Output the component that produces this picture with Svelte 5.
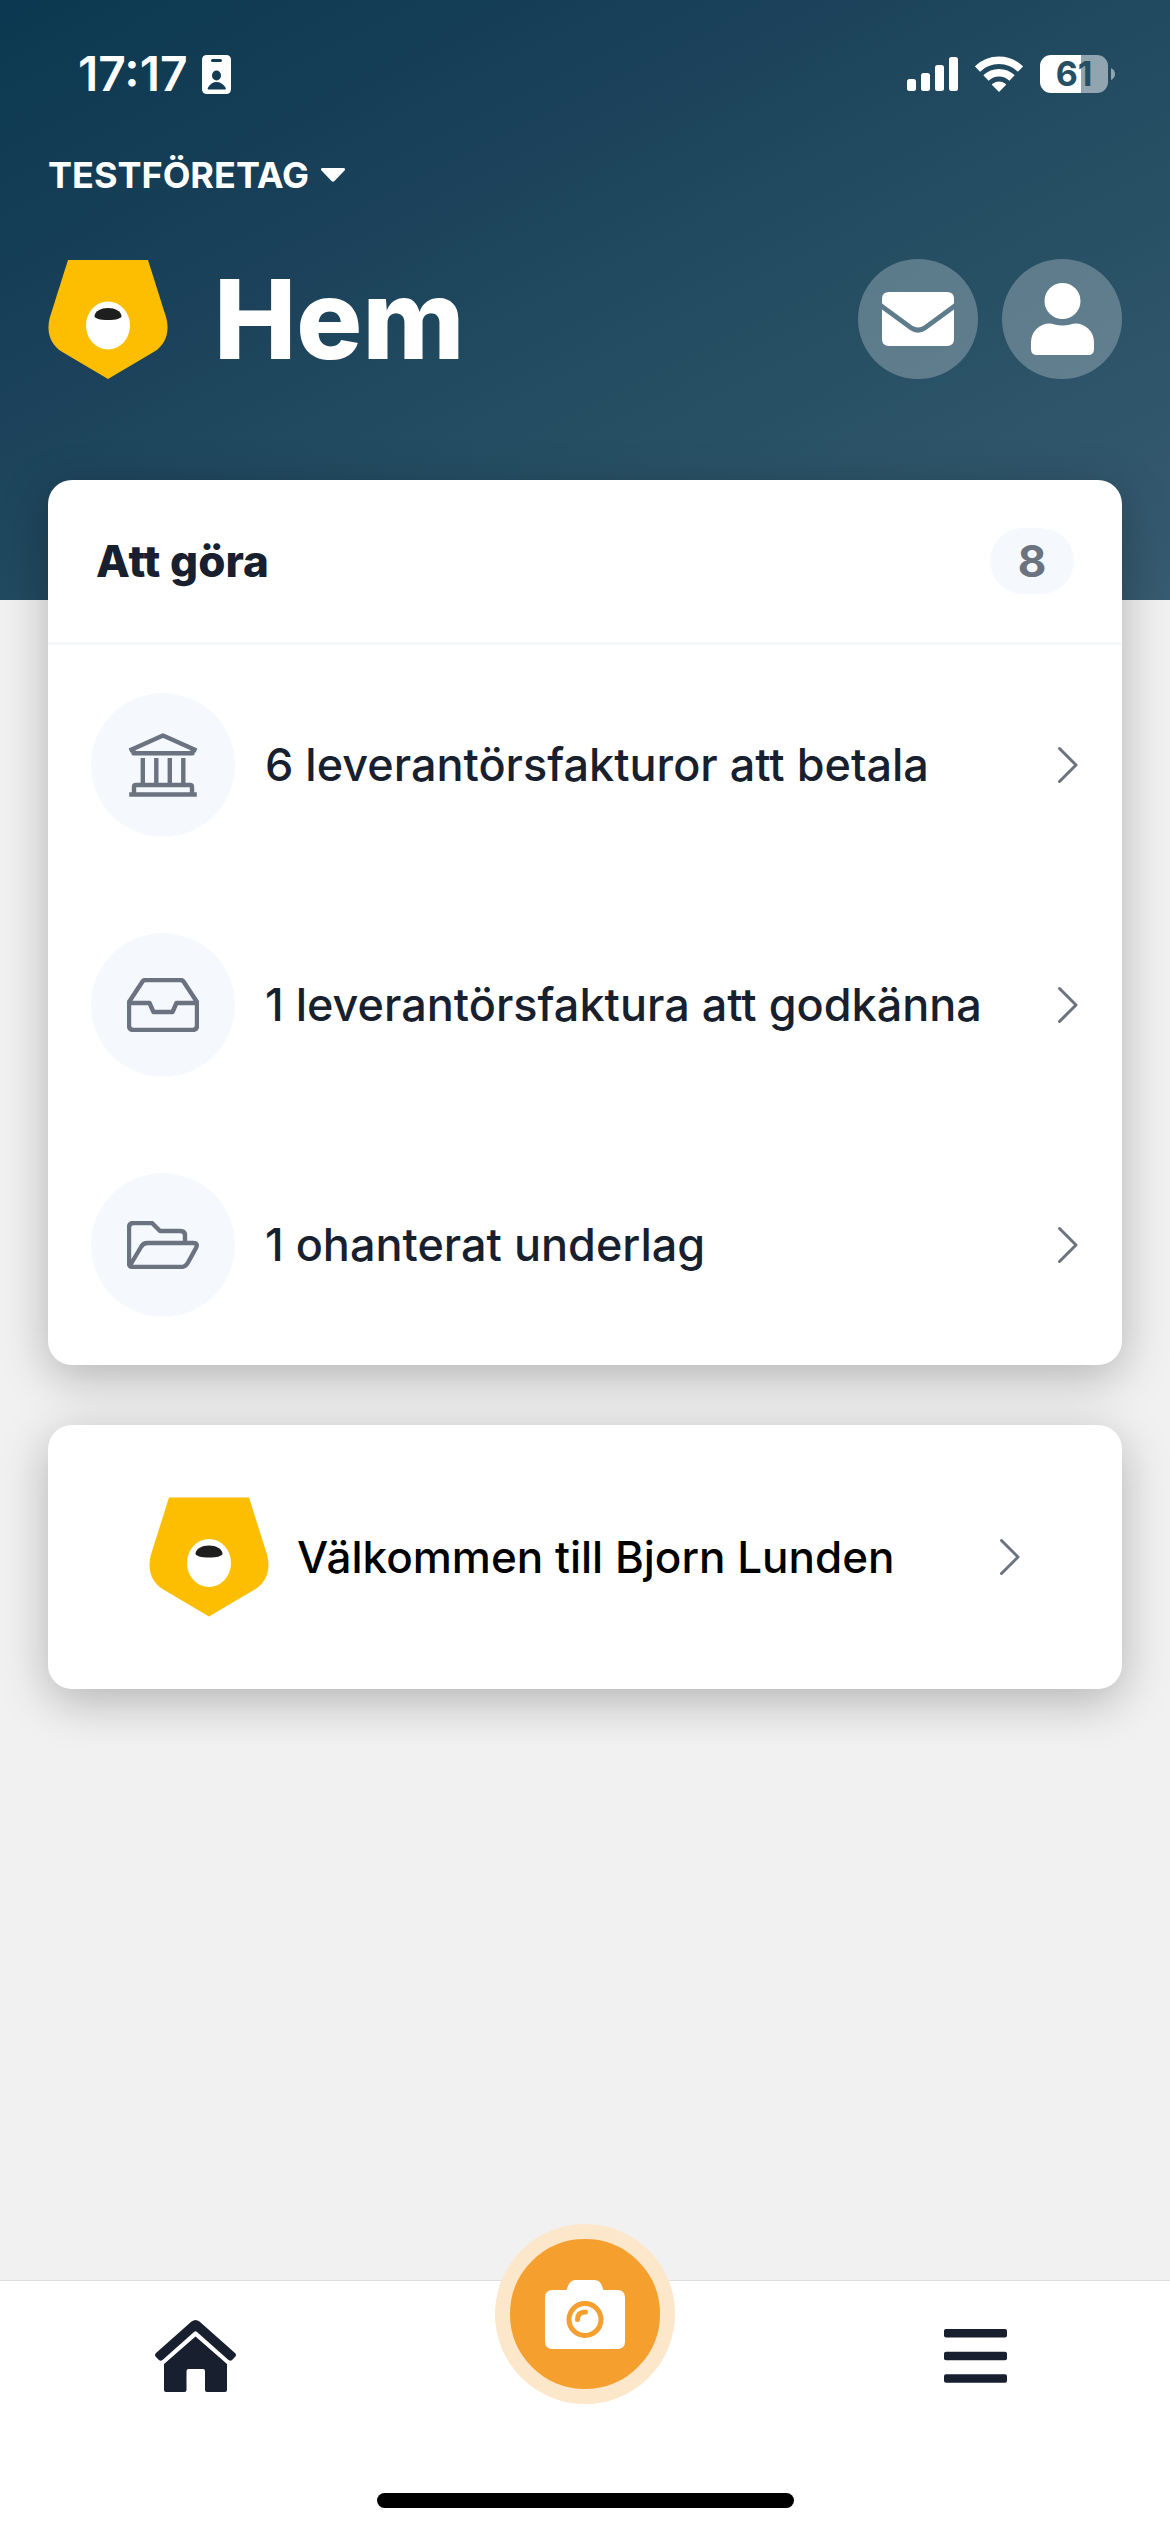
<script>
  const company = 'TESTFÖRETAG';
  const tasks = [
    { icon: 'bank', label: '6 leverantörsfakturor att betala' },
    { icon: 'inbox', label: '1 leverantörsfaktura att godkänna' },
    { icon: 'folder', label: '1 ohanterat underlag' }
  ];
  const total = 8;
</script>

{#snippet logo()}
  <svg class="logo" width="120" height="119" viewBox="0 0 120 119" aria-hidden="true">
    <path fill="#fdbe02" d="M20 0H100L118.300 58C122 73 117 84.500 106.500 91.500L60 119L13.500 91.500C3 84.500-2 73 1.700 58Z" />
    <ellipse cx="60" cy="65.500" rx="22" ry="24" fill="#fff" />
    <path fill="#1e1e1e" d="M46.500 56C47 51 53 48 60 48S73 51 73.500 56C73.500 58.500 68 60 60 60S46.500 58.500 46.500 56Z" />
  </svg>
{/snippet}

{#snippet chevron()}
  <svg class="chevron" width="22" height="38" viewBox="0 0 22 38" aria-hidden="true">
    <path d="M2.500 2.500L19 19L2.500 35.500" />
  </svg>
{/snippet}

<div class="app">
  <header class="top">
    <div class="status">
      <div class="clock">
        <span class="time">17:17</span>
        <svg width="29" height="39" viewBox="0 0 29 39" aria-hidden="true">
          <path fill="#fff" fill-rule="evenodd" d="M5 0H24Q29 0 29 5V34Q29 39 24 39H5Q0 39 0 34V5Q0 0 5 0ZM10.500 4Q9 4 9 5.500T10.500 7H18.500Q20 7 20 5.500T18.500 4ZM14.500 15.500A4.500 5 0 1 0 14.500 25.500A4.500 5 0 1 0 14.500 15.500ZM7 34.500Q5 34.500 6 32.500C8 29 11 27 14.500 27S21.500 29 23.500 32.500Q24.500 34.500 22.500 34.500Z" />
        </svg>
      </div>
      <div class="signals">
        <svg width="51" height="34" viewBox="0 0 51 34" fill="#fff" aria-hidden="true">
          <rect x="0" y="22" width="9" height="12" rx="2.500" />
          <rect x="14" y="16" width="9" height="18" rx="2.500" />
          <rect x="28" y="8" width="9" height="26" rx="2.500" />
          <rect x="42" y="0" width="9" height="34" rx="2.500" />
        </svg>
        <svg width="48" height="36" viewBox="0 0 48 36" fill="none" stroke="#fff" aria-hidden="true">
          <path stroke-width="7.500" d="M2.500 13A31 31 0 0 1 45.500 13" />
          <path stroke-width="7.500" d="M11 22A18.500 18.500 0 0 1 37 22" />
          <path fill="#fff" stroke="none" d="M17.300 29.300Q16.500 28.500 17.500 27.800Q24 23 30.500 27.800Q31.500 28.500 30.700 29.300L24 36Z" />
        </svg>
        <div class="battery">
          <span class="level">61</span>
          <svg width="4" height="12" viewBox="0 0 4 12" aria-hidden="true"><path fill="#fff" fill-opacity=".5" d="M0 0Q4 2 4 6T0 12Z" /></svg>
        </div>
      </div>
    </div>

    <button class="company" type="button">
      <span>{company}</span>
      <svg width="24" height="14" viewBox="0 0 24 14" aria-hidden="true">
        <path fill="#fff" d="M1.500 0H22.500Q25 .5 23.500 2.500L13.500 13Q12 14.500 10.500 13L.5 2.500Q-1 .5 1.500 0Z" />
      </svg>
    </button>

    <div class="hero">
      {@render logo()}
      <h1>Hem</h1>
      <button class="round" type="button" aria-label="Meddelanden">
        <svg width="72" height="54" viewBox="0 0 72 54" fill="#fff" aria-hidden="true">
          <path d="M0 7Q0 0 7 0H65Q72 0 72 7V11.500L42 33.500Q36 37.500 30 33.500L0 11.500Z" />
          <path d="M0 17.500L28 38Q36 43.500 44 38L72 17.500V47Q72 54 65 54H7Q0 54 0 47Z" />
        </svg>
      </button>
      <button class="round" type="button" aria-label="Profil">
        <svg width="63" height="72" viewBox="0 0 63 72" fill="#fff" aria-hidden="true">
          <circle cx="31.500" cy="18" r="18" />
          <path d="M0 59A18.500 18.500 0 0 1 18.500 40.500Q21 40.500 23.500 41.500Q31.500 43.500 39.500 41.500Q42 40.500 44.500 40.500A18.500 18.500 0 0 1 63 59V66Q63 72 57 72H6Q0 72 0 66Z" />
        </svg>
      </button>
    </div>
  </header>

  <main>
    <section class="card">
      <div class="card-head">
        <h2>Att göra</h2>
        <span class="count">{total}</span>
      </div>
      <ul>
        {#each tasks as task}
          <li>
            <a class="task" href="#{task.icon}">
              <span class="bubble">
                {#if task.icon === 'bank'}
                  <svg width="72" height="64" viewBox="0 0 72 64" aria-hidden="true">
                    <path d="M2.500 17.500L36 2.500L69.500 17.500M6.500 17V20.300H65.500V17M15.800 25V51M29.300 25V51M42.800 25V51M56.300 25V51M7 61V54Q7 52 9 52H63Q65 52 65 54V61M2.200 61.500H69.800" />
                  </svg>
                {:else if task.icon === 'inbox'}
                  <svg width="72" height="54" viewBox="0 0 72 54" aria-hidden="true">
                    <path d="M2 24L15.500 3.500Q16.500 2 18.500 2H53.500Q55.500 2 56.500 3.500L70 24V47.500Q70 52 65.500 52H6.500Q2 52 2 47.500ZM2 25H22.500L26.500 34H45.500L49.500 25H70" />
                  </svg>
                {:else}
                  <svg width="72" height="48" viewBox="0 0 72 48" aria-hidden="true">
                    <path d="M2 42V6.500Q2 2 6.500 2H25L33 10H53.500Q58 10 58 14.500V21M3 44.500L14 26Q16 22 20.500 22H66Q71.500 22 69 27L61 41.500Q58.500 46 54 46H6Q2 46 2 42" />
                  </svg>
                {/if}
              </span>
              <span class="label">{task.label}</span>
              {@render chevron()}
            </a>
          </li>
        {/each}
      </ul>
    </section>

    <a class="card welcome" href="#welcome">
      {@render logo()}
      <span class="label">Välkommen till Bjorn Lunden</span>
      {@render chevron()}
    </a>
  </main>

  <nav>
    <div class="tabs">
      <a class="tab" href="#home" aria-label="Hem">
        <svg width="81" height="72" viewBox="0 0 81 72" fill="#181f2e" aria-hidden="true">
          <path d="M36.500 1.500Q40.500-1.500 44.500 1.500L80 33Q82 35 80 37L77 40Q75.500 41.500 73.500 40L42 12Q40.500 10.500 39 12L7.500 40Q5.500 41.500 4 40L1 37Q-1 35 1 33Z" />
          <path d="M40.500 16.500L72 44V70Q72 72 70 72H52Q50 72 50 70V51Q50 49 48 49H33.500Q31.500 49 31.500 51V70Q31.500 72 29.500 72H11Q9 72 9 70V44Z" />
        </svg>
      </a>
      <button class="camera" type="button" aria-label="Kamera">
        <svg width="80" height="69" viewBox="0 0 80 69" fill="none" aria-hidden="true">
          <path fill="#fff" d="M7.500 10H21.500L23 6Q25 0 30.500 0H49.500Q55 0 57 6L58.500 10H72.500Q80 10 80 17.500V61.500Q80 69 72.500 69H7.500Q0 69 0 61.500V17.500Q0 10 7.500 10Z" />
          <circle cx="40" cy="39.500" r="16" stroke="#f49f2e" stroke-width="5" />
          <path d="M32.500 39.500Q32.500 32 40.500 32" stroke="#f49f2e" stroke-width="5" stroke-linecap="round" />
        </svg>
      </button>
      <button class="tab menu" type="button" aria-label="Meny">
        <svg width="63" height="54" viewBox="0 0 63 54" fill="#181f2e" aria-hidden="true">
          <rect y="0" width="63" height="8.500" rx="2" />
          <rect y="22.700" width="63" height="8.500" rx="2" />
          <rect y="45.300" width="63" height="8.500" rx="2" />
        </svg>
      </button>
    </div>
    <div class="home-bar"></div>
  </nav>
</div>

<style>
  :global(body) {
    margin: 0;
    background: #f1f1f1;
  }

  .app {
    display: flex;
    flex-direction: column;
    min-height: 100vh;
    font-family: Inter, 'Liberation Sans', sans-serif;
    color: #181f2e;
  }

  button {
    margin: 0;
    padding: 0;
    border: 0;
    background: none;
    color: inherit;
    font: inherit;
    cursor: pointer;
  }

  a {
    color: inherit;
    text-decoration: none;
  }

  svg {
    display: block;
    flex: none;
  }

  h1,
  h2,
  ul {
    margin: 0;
    padding: 0;
    list-style: none;
  }

  .top {
    padding: 46px 48px 221px;
    background: linear-gradient(to bottom right, #0b3850, #1b425a 35%, #254e63 60%, #375b70);
    color: #fff;
  }

  .status {
    display: flex;
    align-items: center;
    justify-content: space-between;
    height: 56px;
    padding: 0 7px 0 30px;
  }

  .clock,
  .signals,
  .battery {
    display: flex;
    align-items: center;
  }

  .clock {
    gap: 14px;
  }

  .time {
    font-size: 48px;
    line-height: 56px;
    font-weight: 600;
  }

  .signals {
    gap: 17px;
  }

  .battery {
    gap: 3px;
  }

  .level {
    width: 68px;
    border-radius: 11px;
    background: linear-gradient(to right, #fff 60%, rgba(255, 255, 255, 0.5) 60%);
    color: #264f64;
    font-size: 34px;
    line-height: 38px;
    font-weight: 700;
    text-align: center;
  }

  .company {
    display: flex;
    align-items: center;
    gap: 12px;
    margin-top: 51px;
    font-size: 36px;
    line-height: 44px;
    font-weight: 700;
  }

  .hero {
    display: flex;
    align-items: center;
    gap: 24px;
    height: 120px;
    margin-top: 62px;
  }

  h1 {
    flex: 1;
    padding-left: 22px;
    font-size: 110px;
    line-height: 120px;
    font-weight: 800;
  }

  .round {
    display: grid;
    place-items: center;
    width: 120px;
    height: 120px;
    border-radius: 50%;
    background: rgba(255, 255, 255, 0.25);
  }

  main {
    display: flex;
    flex-direction: column;
    gap: 60px;
    margin-top: -120px;
    padding: 0 48px 60px;
  }

  .card {
    border-radius: 24px;
    background: #fff;
    box-shadow: 0 12px 48px rgba(0, 0, 0, 0.26);
  }

  .card-head {
    display: flex;
    align-items: center;
    justify-content: space-between;
    padding: 48px;
    border-bottom: 3px solid #f5f9fd;
  }

  h2,
  .count {
    font-size: 44px;
    line-height: 66px;
    font-weight: 700;
  }

  h2 {
    font-weight: 800;
  }

  .count {
    min-width: 84px;
    border-radius: 33px;
    background: #f5f9fd;
    color: #6b7280;
    text-align: center;
  }

  .task {
    display: flex;
    align-items: center;
    gap: 30px;
    padding: 48px 43px;
  }

  .bubble {
    display: grid;
    flex: none;
    place-items: center;
    width: 144px;
    height: 144px;
    border-radius: 50%;
    background: #f5f9fd;
  }

  .bubble path,
  .chevron path {
    fill: none;
    stroke: #6b7280;
    stroke-width: 4.4;
    stroke-linejoin: round;
  }

  .chevron path {
    stroke-width: 3;
    stroke-linecap: round;
  }

  .label {
    flex: 1;
    font-size: 45px;
    line-height: 66px;
    font-weight: 500;
  }

  .welcome {
    display: flex;
    align-items: center;
    gap: 28px;
    padding: 72px 101px;
    color: #000;
  }

  .welcome .logo {
    height: 120px;
  }

  .welcome .label {
    font-size: 44px;
  }

  nav {
    margin-top: auto;
    padding-bottom: 24px;
    border-top: 1px solid #dfdfdf;
    background: #fff;
  }

  .tabs {
    display: grid;
    grid-template-columns: repeat(3, 1fr);
    justify-items: center;
    align-items: start;
    height: 212px;
  }

  .tab {
    display: grid;
    place-items: center;
    height: 150px;
    min-width: 120px;
  }

  .camera {
    display: grid;
    place-items: center;
    width: 180px;
    height: 180px;
    margin-top: -57px;
    border: 15px solid #fde7ca;
    border-radius: 50%;
    background: #f49f2e;
  }

  .home-bar {
    width: 36%;
    max-width: 417px;
    height: 15px;
    margin: 0 auto;
    border-radius: 8px;
    background: #000;
  }
</style>
